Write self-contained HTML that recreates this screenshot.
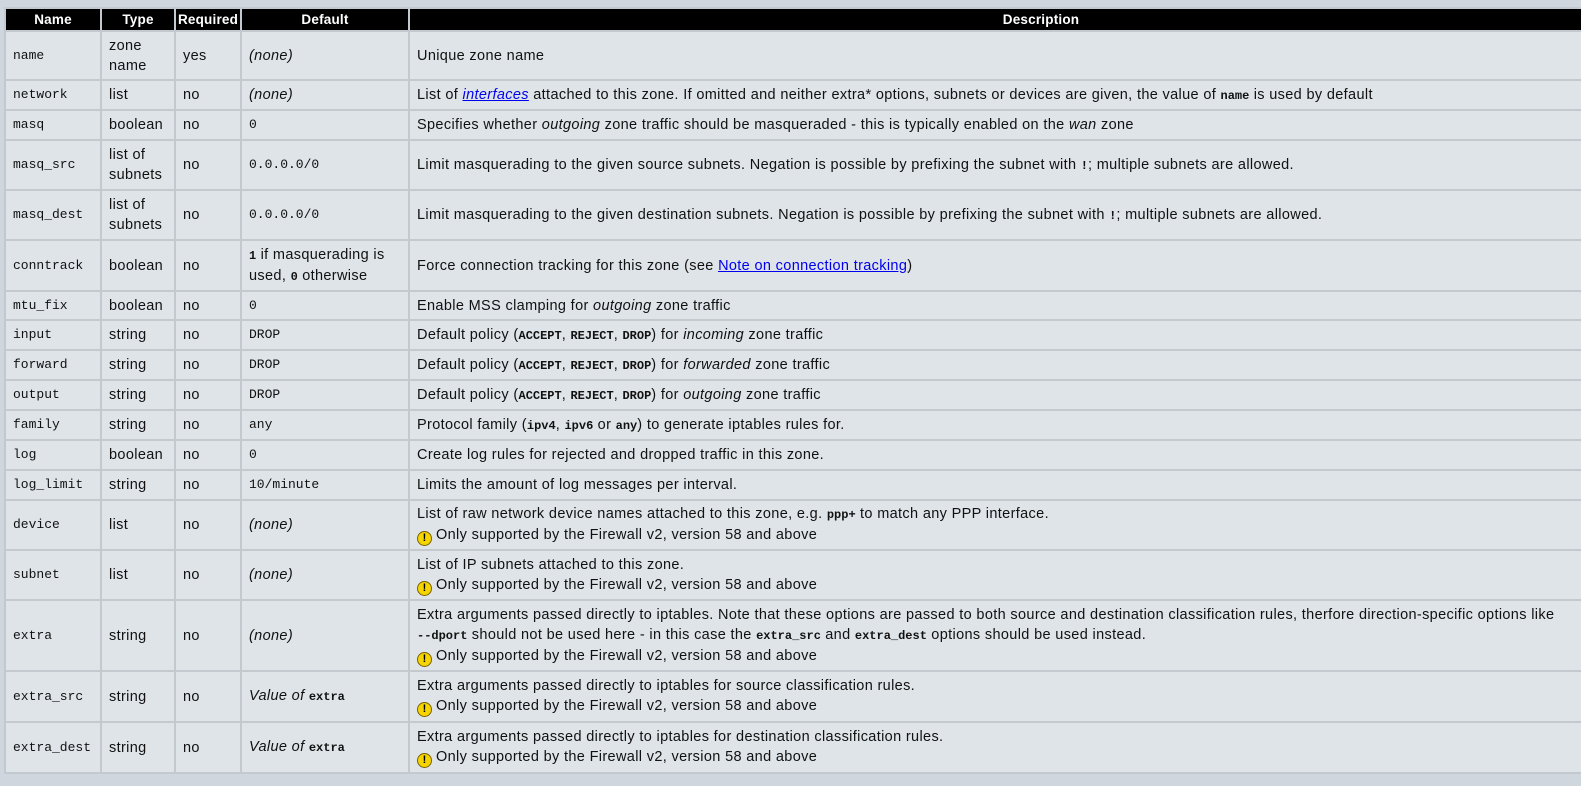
<!DOCTYPE html>
<html><head><meta charset="utf-8"><style>
body{margin:0;background:#cfd6dd;width:1581px;height:786px;overflow:hidden;font-family:"Liberation Sans",sans-serif;font-size:14.5px;letter-spacing:0.35px;color:#111;}
table{position:absolute;left:4px;top:7px;width:1670px;border-collapse:separate;border-spacing:2px;background:#c3c9ce;table-layout:fixed;}
th{background:#000;color:#fff;font-weight:bold;font-size:13.5px;letter-spacing:0.2px;height:21px;padding:0;text-align:center;}
td{background:#dfe4e8;padding:0 7px;vertical-align:middle;line-height:20px;white-space:nowrap;}
code,.c{font-family:"Liberation Mono",monospace;font-size:13px;letter-spacing:0;}
code{font-size:12px;font-weight:bold;}
i{font-style:italic}
a{color:#00e;text-decoration:underline}
.w{display:inline-block;width:15px;height:15px;border-radius:50%;background:#f5d400;border:1px solid #7a6200;box-sizing:border-box;color:#000;font-size:11px;font-weight:bold;line-height:13px;text-align:center;vertical-align:-2px;margin-right:4px;letter-spacing:0}
</style></head><body>
<table>
<colgroup><col style="width:94px"><col style="width:72px"><col style="width:64px"><col style="width:166px"><col></colgroup>
<tr><th>Name</th><th>Type</th><th>Required</th><th>Default</th><th>Description</th></tr>
<tr style="height:47px"><td class="c">name</td><td>zone<br>name</td><td>yes</td><td><i>(none)</i></td><td>Unique zone name</td></tr>
<tr style="height:28px"><td class="c">network</td><td>list</td><td>no</td><td><i>(none)</i></td><td>List of <a><i>interfaces</i></a> attached to this zone. If omitted and neither extra* options, subnets or devices are given, the value of <code>name</code> is used by default</td></tr>
<tr style="height:28px"><td class="c">masq</td><td>boolean</td><td>no</td><td class="c">0</td><td>Specifies whether <i>outgoing</i> zone traffic should be masqueraded - this is typically enabled on the <i>wan</i> zone</td></tr>
<tr style="height:48px"><td class="c">masq_src</td><td>list of<br>subnets</td><td>no</td><td class="c">0.0.0.0/0</td><td>Limit masquerading to the given source subnets. Negation is possible by prefixing the subnet with <code>!</code>; multiple subnets are allowed.</td></tr>
<tr style="height:48px"><td class="c">masq_dest</td><td>list of<br>subnets</td><td>no</td><td class="c">0.0.0.0/0</td><td>Limit masquerading to the given destination subnets. Negation is possible by prefixing the subnet with <code>!</code>; multiple subnets are allowed.</td></tr>
<tr style="height:49px"><td class="c">conntrack</td><td>boolean</td><td>no</td><td><code>1</code> if masquerading is<br>used, <code>0</code> otherwise</td><td>Force connection tracking for this zone (see <a>Note on connection tracking</a>)</td></tr>
<tr style="height:27px"><td class="c">mtu_fix</td><td>boolean</td><td>no</td><td class="c">0</td><td>Enable MSS clamping for <i>outgoing</i> zone traffic</td></tr>
<tr style="height:28px"><td class="c">input</td><td>string</td><td>no</td><td class="c">DROP</td><td>Default policy (<code>ACCEPT</code>, <code>REJECT</code>, <code>DROP</code>) for <i>incoming</i> zone traffic</td></tr>
<tr style="height:28px"><td class="c">forward</td><td>string</td><td>no</td><td class="c">DROP</td><td>Default policy (<code>ACCEPT</code>, <code>REJECT</code>, <code>DROP</code>) for <i>forwarded</i> zone traffic</td></tr>
<tr style="height:28px"><td class="c">output</td><td>string</td><td>no</td><td class="c">DROP</td><td>Default policy (<code>ACCEPT</code>, <code>REJECT</code>, <code>DROP</code>) for <i>outgoing</i> zone traffic</td></tr>
<tr style="height:28px"><td class="c">family</td><td>string</td><td>no</td><td class="c">any</td><td>Protocol family (<code>ipv4</code>, <code>ipv6</code> or <code>any</code>) to generate iptables rules for.</td></tr>
<tr style="height:28px"><td class="c">log</td><td>boolean</td><td>no</td><td class="c">0</td><td>Create log rules for rejected and dropped traffic in this zone.</td></tr>
<tr style="height:28px"><td class="c">log_limit</td><td>string</td><td>no</td><td class="c">10/minute</td><td>Limits the amount of log messages per interval.</td></tr>
<tr style="height:48px"><td class="c">device</td><td>list</td><td>no</td><td><i>(none)</i></td><td>List of raw network device names attached to this zone, e.g. <code>ppp+</code> to match any PPP interface.<br><span class="w">!</span>Only supported by the Firewall v2, version 58 and above</td></tr>
<tr style="height:48px"><td class="c">subnet</td><td>list</td><td>no</td><td><i>(none)</i></td><td>List of IP subnets attached to this zone.<br><span class="w">!</span>Only supported by the Firewall v2, version 58 and above</td></tr>
<tr style="height:69px"><td class="c">extra</td><td>string</td><td>no</td><td><i>(none)</i></td><td>Extra arguments passed directly to iptables. Note that these options are passed to both source and destination classification rules, therfore direction-specific options like<br><code>--dport</code> should not be used here - in this case the <code>extra_src</code> and <code>extra_dest</code> options should be used instead.<br><span class="w">!</span>Only supported by the Firewall v2, version 58 and above</td></tr>
<tr style="height:49px"><td class="c">extra_src</td><td>string</td><td>no</td><td><i>Value of</i> <code>extra</code></td><td>Extra arguments passed directly to iptables for source classification rules.<br><span class="w">!</span>Only supported by the Firewall v2, version 58 and above</td></tr>
<tr style="height:49px"><td class="c">extra_dest</td><td>string</td><td>no</td><td><i>Value of</i> <code>extra</code></td><td>Extra arguments passed directly to iptables for destination classification rules.<br><span class="w">!</span>Only supported by the Firewall v2, version 58 and above</td></tr>
</table>
</body></html>
